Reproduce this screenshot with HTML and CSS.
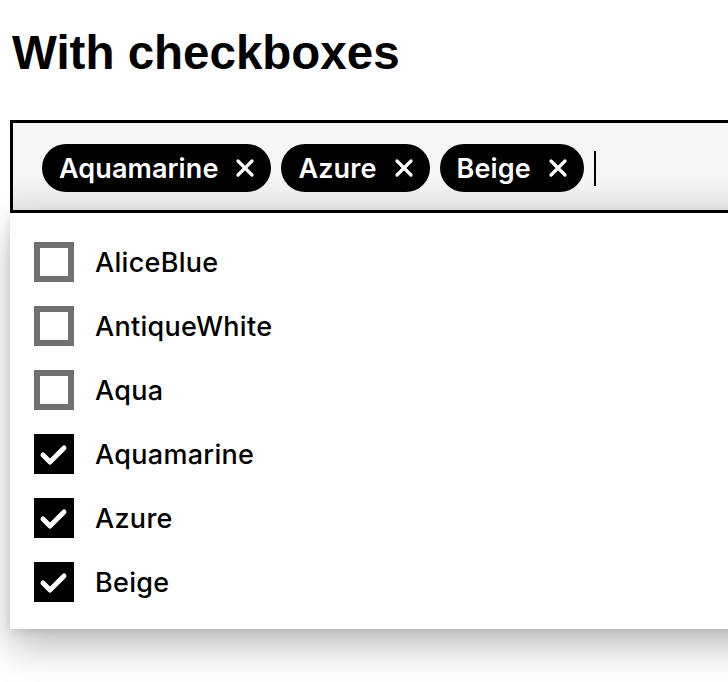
FILE: index.html
```html
<!DOCTYPE html>
<html lang="en">
<head>
<meta charset="utf-8">
<title>With checkboxes</title>
<link rel="stylesheet" href="styles.css">
</head>
<body>
<main class="page">
  <h1 class="title">With checkboxes</h1>
  <div class="combo">
    <div class="field">
      <span class="chip">Aquamarine<span class="chip-x"><svg viewBox="0 0 20 20" width="20" height="20"><path d="M3 3 L17 17 M17 3 L3 17" stroke="#fff" stroke-width="3.2" stroke-linecap="round"/></svg></span></span>
      <span class="chip">Azure<span class="chip-x"><svg viewBox="0 0 20 20" width="20" height="20"><path d="M3 3 L17 17 M17 3 L3 17" stroke="#fff" stroke-width="3.2" stroke-linecap="round"/></svg></span></span>
      <span class="chip">Beige<span class="chip-x"><svg viewBox="0 0 20 20" width="20" height="20"><path d="M3 3 L17 17 M17 3 L3 17" stroke="#fff" stroke-width="3.2" stroke-linecap="round"/></svg></span></span>
      <span class="caret"></span>
    </div>
    <ul class="menu">
      <li class="option"><span class="box"></span><span class="label">AliceBlue</span></li>
      <li class="option"><span class="box"></span><span class="label">AntiqueWhite</span></li>
      <li class="option"><span class="box"></span><span class="label">Aqua</span></li>
      <li class="option"><span class="box checked"><svg viewBox="0 0 40 40" width="40" height="40"><path d="M9 21 L16 28 L30 14" fill="none" stroke="#fff" stroke-width="5" stroke-linecap="round" stroke-linejoin="round"/></svg></span><span class="label">Aquamarine</span></li>
      <li class="option"><span class="box checked"><svg viewBox="0 0 40 40" width="40" height="40"><path d="M9 21 L16 28 L30 14" fill="none" stroke="#fff" stroke-width="5" stroke-linecap="round" stroke-linejoin="round"/></svg></span><span class="label">Azure</span></li>
      <li class="option"><span class="box checked"><svg viewBox="0 0 40 40" width="40" height="40"><path d="M9 21 L16 28 L30 14" fill="none" stroke="#fff" stroke-width="5" stroke-linecap="round" stroke-linejoin="round"/></svg></span><span class="label">Beige</span></li>
    </ul>
  </div>
</main>
</body>
</html>
```

FILE: styles.css
```css
html, body {
  margin: 0;
  padding: 0;
  background: #fff;
  overflow: hidden;
}

.page {
  width: 820px;
  height: 682px;
  padding: 25px 0 0 10px;
  font-family: Inter, "Liberation Sans", sans-serif;
  color: #000;
}

.title {
  margin: 0 0 40px 2px;
  font-family: "Liberation Sans", Arial, sans-serif;
  font-weight: 700;
  font-size: 47.5px;
  line-height: 55px;
}

.combo {
  width: 100%;
}

.field {
  box-sizing: border-box;
  height: 93px;
  border: 3px solid #000;
  background: linear-gradient(to bottom, #f6f6f6 0%, #f5f5f5 65%, #e6e6e6 100%);
  display: flex;
  align-items: center;
  gap: 10px;
  padding: 3px 0 0 29px;
}

.chip {
  display: inline-flex;
  align-items: center;
  height: 48px;
  padding: 0 15px 0 17px;
  border-radius: 24px;
  background: #000;
  color: #fff;
  font-size: 27px;
  font-weight: 600;
  letter-spacing: 0.1px;
}

.chip-x {
  display: inline-flex;
  margin-left: 16px;
  width: 22px;
  height: 22px;
  align-items: center;
  justify-content: center;
}

.caret {
  width: 2px;
  height: 35px;
  background: #000;
}

.menu {
  list-style: none;
  margin: 0;
  padding: 17px 0 15px 0;
  background: #fff;
  box-shadow: 0 18px 36px rgba(0, 0, 0, 0.26), 0 2px 8px rgba(0, 0, 0, 0.1);
}

.option {
  display: flex;
  align-items: center;
  height: 64px;
  padding-left: 24px;
}

.box {
  box-sizing: border-box;
  width: 40px;
  height: 40px;
  border: 6px solid #707070;
  background: #fff;
  display: flex;
  align-items: center;
  justify-content: center;
}

.box.checked {
  border: none;
  background: #000;
}

.label {
  margin-left: 21px;
  font-size: 27px;
  font-weight: 500;
  letter-spacing: 0.3px;
}
```
